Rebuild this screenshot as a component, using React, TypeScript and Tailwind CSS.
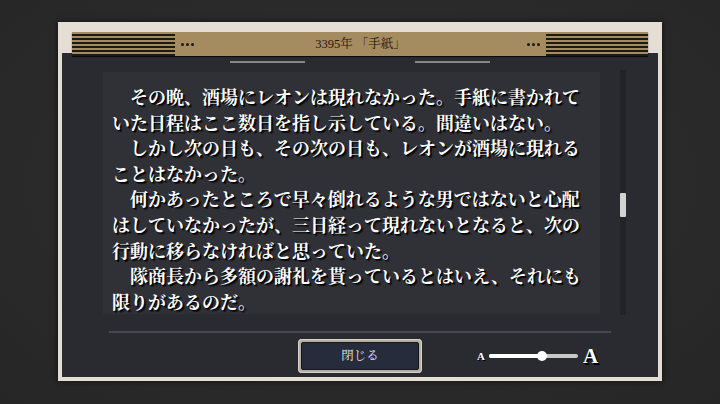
import React from "react";

const lines = [
  "　その晩、酒場にレオンは現れなかった。手紙に書かれて",
  "いた日程はここ数日を指し示している。間違いはない。",
  "　しかし次の日も、その次の日も、レオンが酒場に現れる",
  "ことはなかった。",
  "　何かあったところで早々倒れるような男ではないと心配",
  "はしていなかったが、三日経って現れないとなると、次の",
  "行動に移らなければと思っていた。",
  "　隊商長から多額の謝礼を貰っているとはいえ、それにも",
  "限りがあるのだ。",
];

const serif =
  "font-['Liberation_Serif','Noto_Serif_CJK_JP','Noto_Sans_CJK_JP',serif]";

const Dots = () => (
  <div className="flex items-center gap-[2px]">
    <span className="w-[3px] h-[3px] rounded-full bg-[#1e1810]" />
    <span className="w-[3px] h-[3px] rounded-full bg-[#1e1810]" />
    <span className="w-[3px] h-[3px] rounded-full bg-[#1e1810]" />
  </div>
);

const Stripes = ({ w }: { w: string }) => (
  <div
    className={`${w} h-full bg-[repeating-linear-gradient(to_bottom,#a58b60_0px,#a58b60_2px,#1d1914_2px,#1d1914_4px)]`}
  />
);

const App = () => {
  return (
    <div className="w-[720px] h-[404px] bg-[#2b2b2b] bg-[radial-gradient(ellipse_at_50%_45%,#333333_0%,#2a2a2a_60%,#262626_100%)] flex justify-center pt-[22px] overflow-hidden">
      <div className="w-[604px] h-[359px] bg-[#e4ded4] px-[4px] pb-[4px] pt-[10px] flex flex-col shadow-[0_0_6px_rgba(0,0,0,0.6)]">
        {/* header */}
        <div className="relative z-10 mx-[10px] h-[24px] bg-[#a58b60] flex items-center shadow-[0_1px_1px_rgba(0,0,0,0.7)]">
          <Stripes w="w-[103px]" />
          <div className="ml-[6px]">
            <Dots />
          </div>
          <div
            className={`flex-1 text-center text-[12.5px] leading-none text-[#1e1810] ${serif}`}
          >
            3395年 「手紙」
          </div>
          <div className="mr-[6px]">
            <Dots />
          </div>
          <Stripes w="w-[102px]" />
        </div>

        {/* panel */}
        <div className="-mt-[3px] flex-1 bg-[#2a2b30] flex flex-col">
          <div className="flex justify-center gap-[110px] mt-[8px]">
            <div className="w-[75px] h-[2px] bg-[#85868a]" />
            <div className="w-[75px] h-[2px] bg-[#85868a]" />
          </div>

          <div className="flex mt-[9px] pl-[41px]">
            <div className="w-[497px] h-[242px] bg-[#303137] pt-[12px] pl-[9px] overflow-hidden">
              {lines.map((l, i) => (
                <div
                  key={i}
                  className="whitespace-nowrap text-[18px] leading-[25.6px] font-bold text-white font-['Noto_Serif_CJK_JP','Noto_Sans_CJK_JP',sans-serif] [text-shadow:1px_1px_0_#000,2px_2px_1px_rgba(0,0,0,0.7)]"
                >
                  {l}
                </div>
              ))}
            </div>
            <div className="ml-[20px] -mt-[2px] w-[6px] h-[245px] bg-[#222327] flex flex-col">
              <div className="mt-[123px] h-[24px] w-[6px] bg-[#d2d2d2] rounded-[1px]" />
            </div>
          </div>

          <div className="mt-[16px] ml-[47px] w-[502px] h-[2px] bg-[#454850]" />

          <div className="flex items-center mt-[6px]">
            <div className="ml-[236px] w-[124px] h-[34px] rounded-[4px] bg-[#b5b0a3] p-[3px] shadow-[inset_0_0_0_1px_#d8d3c6]">
              <div className="w-full h-full rounded-[2px] bg-[#262c3b] border border-[#14161c] flex items-center justify-center">
                <span
                  className={`text-[12.5px] text-[#e6e6e6] ${serif}`}
                >
                  閉じる
                </span>
              </div>
            </div>

            <div className="ml-[55px] flex items-center">
              <span
                className={`text-[11px] font-bold text-white leading-none ${serif} [text-shadow:1px_1px_0_#000]`}
              >
                A
              </span>
              <div className="ml-[4px] w-[89px] h-[4px] rounded-full bg-[#c9c9c9] flex items-center">
                <div className="w-[53px] h-[4px] rounded-full bg-white" />
                <div className="-ml-[5px] w-[10px] h-[10px] rounded-full bg-white" />
              </div>
              <span
                className={`ml-[5px] text-[21px] font-bold text-white leading-none ${serif} [text-shadow:1px_1px_0_#000,2px_2px_0_#000]`}
              >
                A
              </span>
            </div>
          </div>
        </div>
      </div>
    </div>
  );
};

export default App;
